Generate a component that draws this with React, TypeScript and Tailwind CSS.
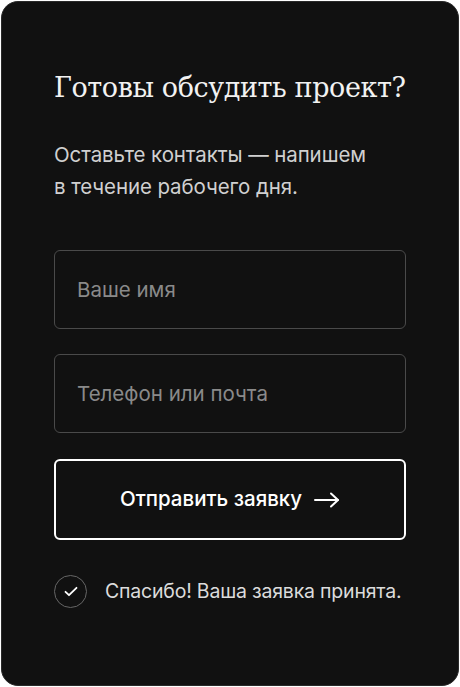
import React from "react";

const sans = { fontFamily: "Inter, 'Noto Sans', sans-serif" };

export default function App() {
  return (
    <div className="w-[460px] h-[687px] bg-white p-px">
      <div
        className="h-full w-full rounded-[17px] bg-[#111111] border border-[#2a2a2a] px-[52px] pt-[66px]"
        style={sans}
      >
        <h2
          className="whitespace-nowrap text-[27px] leading-[40px] text-[#f2f2f2] tracking-[-0.4px]"
          style={{ fontFamily: "'DejaVu Serif', 'Liberation Serif', serif" }}
        >
          Готовы обсудить проект?
        </h2>
        <p className="mt-[31px] text-[20.5px] leading-[32px] text-[#d0d0d0] tracking-[-0.1px]">
          Оставьте контакты — напишем
          <br />в течение рабочего дня.
        </p>

        <form className="mt-[47px] flex flex-col" onSubmit={(e) => e.preventDefault()}>
          <input
            placeholder="Ваше имя"
            className="h-[79px] w-full rounded-[6px] border border-[#4a4a4a] bg-transparent px-[22px] text-[20.5px] text-white placeholder:text-[#8a8a8a] outline-none"
          />
          <input
            placeholder="Телефон или почта"
            className="mt-[25px] h-[79px] w-full rounded-[6px] border border-[#4a4a4a] bg-transparent px-[22px] text-[20.5px] text-white placeholder:text-[#8a8a8a] outline-none"
          />
          <button
            type="submit"
            className="mt-[26px] flex h-[81px] w-full items-center justify-center gap-[12px] rounded-[6px] border-2 border-white bg-transparent text-[20.5px] font-medium text-white"
          >
            <span>Отправить заявку</span>
            <svg width="26" height="16" viewBox="0 0 26 16" fill="none" stroke="white" strokeWidth="2" strokeLinecap="round" strokeLinejoin="round">
              <path d="M1 8h23" />
              <path d="M17 1.5 24 8l-7 6.5" />
            </svg>
          </button>
        </form>

        <div className="mt-[35px] flex items-center gap-[18px]">
          <div className="flex h-[33px] w-[33px] shrink-0 items-center justify-center rounded-full border border-[#666]">
            <svg width="14" height="11" viewBox="0 0 14 11" fill="none" stroke="white" strokeWidth="1.8" strokeLinecap="round" strokeLinejoin="round">
              <path d="M1.5 5.8 5 9.2 12.5 1.8" />
            </svg>
          </div>
          <span className="text-[19.5px] text-[#dcdcdc] tracking-[-0.2px] whitespace-nowrap">Спасибо! Ваша заявка принята.</span>
        </div>
      </div>
    </div>
  );
}
